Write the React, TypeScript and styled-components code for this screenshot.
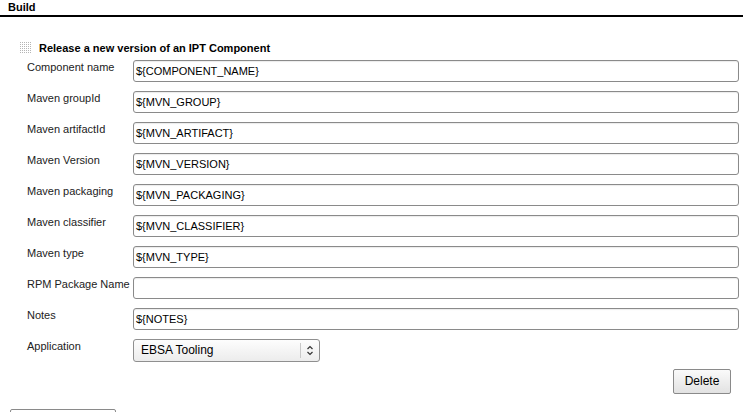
import React from 'react';
import styled, { createGlobalStyle } from 'styled-components';

const fields = [
  { label: 'Component name', value: '${COMPONENT_NAME}' },
  { label: 'Maven groupId', value: '${MVN_GROUP}' },
  { label: 'Maven artifactId', value: '${MVN_ARTIFACT}' },
  { label: 'Maven Version', value: '${MVN_VERSION}' },
  { label: 'Maven packaging', value: '${MVN_PACKAGING}' },
  { label: 'Maven classifier', value: '${MVN_CLASSIFIER}' },
  { label: 'Maven type', value: '${MVN_TYPE}' },
  { label: 'RPM Package Name', value: '' },
  { label: 'Notes', value: '${NOTES}' },
];

const DragHandle = () => {
  const dots: React.ReactNode[] = [];
  for (let r = 0; r < 6; r++) {
    for (let c = 0; c < 6; c++) {
      dots.push(<rect key={`${r}-${c}`} x={c * 2} y={r * 2} width="1" height="1" fill="#b5b5b5" />);
    }
  }
  return (
    <Handle width="11" height="12" viewBox="0 0 11 12">
      {dots}
    </Handle>
  );
};

export default function App() {
  return (
    <Page>
      <GlobalStyle />
      <SectionHeader>Build</SectionHeader>
      <Block>
        <BlockTitle>
          <DragHandle />
          <span>Release a new version of an IPT Component</span>
        </BlockTitle>
        <Form>
          {fields.map(f => (
            <React.Fragment key={f.label}>
              <Label>{f.label}</Label>
              <TextBox>{f.value}</TextBox>
            </React.Fragment>
          ))}
          <Label>Application</Label>
          <Select>
            <SelectValue>EBSA Tooling</SelectValue>
            <SelectArrow>
              <svg width="8" height="11" viewBox="0 0 8 11">
                <path d="M1.5 4 L4 1.5 L6.5 4 M1.5 7 L4 9.5 L6.5 7" fill="none" stroke="#333" strokeWidth="1.2" />
              </svg>
            </SelectArrow>
          </Select>
        </Form>
        <ButtonRow>
          <Button>Delete</Button>
        </ButtonRow>
      </Block>
      <AddButton />
    </Page>
  );
}

const GlobalStyle = createGlobalStyle`
  html, body {
    margin: 0;
    padding: 0;
    background: #fff;
  }
  body {
    font-family: "Liberation Sans", Arial, sans-serif;
    font-size: 11px;
    color: #222;
  }
`;

const Page = styled.div`
  width: 749px;
  height: 412px;
  overflow: hidden;
`;

const SectionHeader = styled.div`
  width: 735px;
  height: 14px;
  padding: 1px 0 0 8px;
  font-weight: bold;
  color: #000;
  line-height: 13px;
  border-bottom: 2px solid #000;
`;

const Block = styled.div`
  padding: 24px 11px 0 20px;
`;

const BlockTitle = styled.div`
  display: flex;
  align-items: center;
  gap: 8px;
  height: 13px;
  font-weight: bold;
  color: #000;
`;

const Handle = styled.svg`
  display: block;
  flex: none;
`;

const Form = styled.div`
  display: grid;
  grid-template-columns: 106px 606px;
  grid-auto-rows: 22px;
  row-gap: 9px;
  margin: 6px 0 0 7px;
`;

const Label = styled.div`
  padding-top: 1px;
  line-height: 13px;
  white-space: nowrap;
`;

const TextBox = styled.div`
  box-sizing: border-box;
  height: 22px;
  border: 1px solid #8a8a8a;
  border-radius: 3px;
  box-shadow: inset 0 1px 1px rgba(0, 0, 0, 0.08);
  padding: 0 2px;
  line-height: 20px;
  color: #000;
  background: #fff;
`;

const Select = styled.div`
  box-sizing: border-box;
  width: 187px;
  height: 23px;
  display: flex;
  border: 1px solid #8f8f8f;
  border-radius: 3px;
  background: linear-gradient(#fdfdfd, #ececec);
  color: #000;
  font-size: 12px;
`;

const SelectValue = styled.div`
  flex: 1;
  padding-left: 7px;
  line-height: 21px;
`;

const SelectArrow = styled.div`
  width: 18px;
  display: flex;
  align-items: center;
  justify-content: center;
  border-left: 1px solid #c8c8c8;
  margin: 3px 0;
`;

const ButtonRow = styled.div`
  display: flex;
  justify-content: flex-end;
  margin-top: 8px;
  padding-right: 7px;
`;

const Button = styled.div`
  box-sizing: border-box;
  width: 58px;
  height: 25px;
  border: 1px solid #8a8a8a;
  border-radius: 2px;
  background: linear-gradient(#fafafa, #e2e2e2);
  color: #000;
  font-size: 12px;
  line-height: 23px;
  text-align: center;
`;

const AddButton = styled.div`
  width: 104px;
  height: 20px;
  margin: 15px 0 0 10px;
  border: 1px solid #8a8a8a;
  border-radius: 2px;
`;
